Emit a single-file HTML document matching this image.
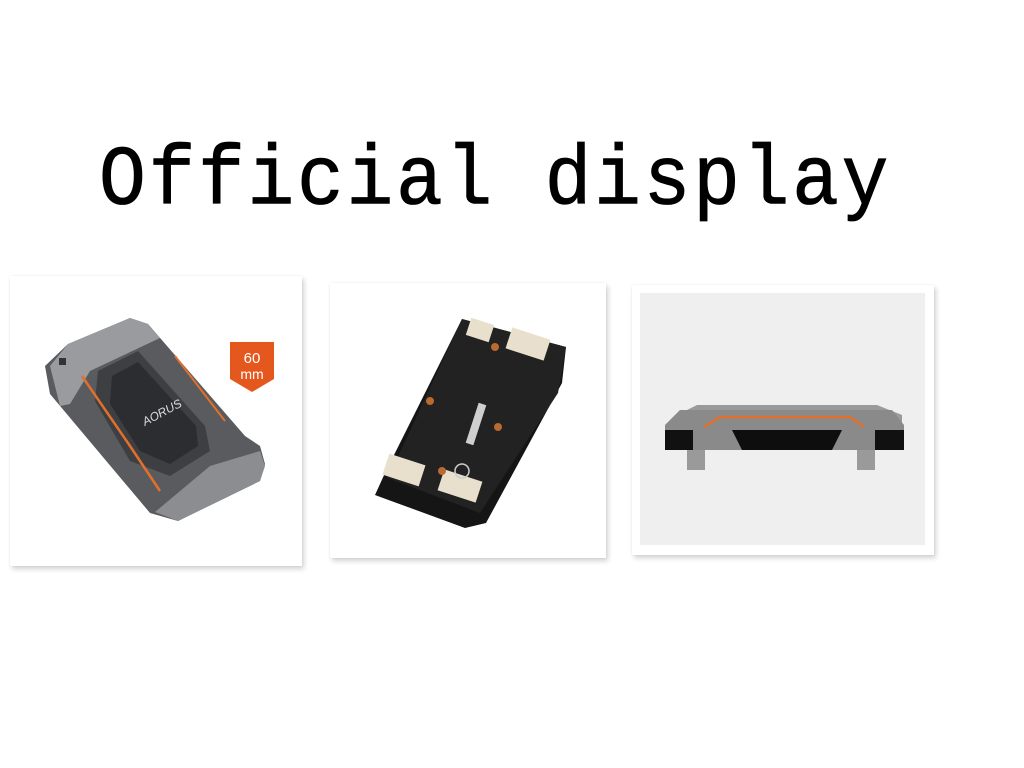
<!DOCTYPE html>
<html><head><meta charset="utf-8"><style>
html,body{margin:0;padding:0;background:#fff;width:1024px;height:768px;overflow:hidden;position:relative}
.t{position:absolute;left:99px;top:135px;font-family:"Liberation Mono",monospace;font-size:78px;line-height:100px;letter-spacing:2.7px;color:#000;white-space:pre;transform:scaleY(1.08);transform-origin:0 89px;font-weight:normal;-webkit-text-stroke:0.8px #000}
.card{position:absolute;background:#fff;box-shadow:2px 3px 5px rgba(0,0,0,0.18),0 0 2px rgba(0,0,0,0.06)}
svg{position:absolute;left:0;top:0}
</style></head><body>
<div class="t">Official display</div>

<div class="card" style="left:10px;top:276px;width:292px;height:290px">
<svg width="292" height="290" viewBox="0 0 292 290">
<polygon points="58,68 120,42 138,48 235,160 250,170 255,188 250,205 168,245 140,237 40,118 35,90" fill="#5a5b5e"/>
<polygon points="40,90 58,68 120,42 138,48 150,62 80,95 60,128 50,130" fill="#9a9b9e"/>
<polygon points="200,190 250,175 255,190 250,205 168,245 145,236" fill="#8c8d90"/>
<polygon points="88,95 128,75 195,150 200,175 160,200 120,185 85,125" fill="#3e3f42"/>
<polygon points="102,100 128,86 186,150 188,170 160,188 130,175 100,128" fill="#2c2d30"/>
<text x="135" y="150" font-family="Liberation Sans,sans-serif" font-size="12" fill="#ddd" transform="rotate(-28 135 150)" font-style="italic">AORUS</text>
<polyline points="72,100 120,170 150,215" stroke="#e2702a" stroke-width="2.5" fill="none"/>
<polyline points="165,80 215,145" stroke="#e2702a" stroke-width="2" fill="none"/>
<rect x="49" y="82" width="7" height="7" fill="#333"/>
<path d="M220 66 h44 v37 l-22 13 l-22 -13 z" fill="#e5581d"/>
<text x="242" y="87" font-family="Liberation Sans,sans-serif" font-size="15" fill="#fff" text-anchor="middle">60</text>
<text x="242" y="103" font-family="Liberation Sans,sans-serif" font-size="14" fill="#fff" text-anchor="middle">mm</text>
</svg></div>

<div class="card" style="left:330px;top:283px;width:276px;height:275px">
<svg width="276" height="275" viewBox="0 0 276 275">
<polygon points="132,36 236,64 232,100 156,240 135,245 45,212 55,190" fill="#151515"/>
<polygon points="132,36 236,64 228,110 150,230 58,195" fill="#222"/>
<rect x="138" y="38" width="24" height="18" fill="#e8e0cc" transform="rotate(18 150 47)"/>
<rect x="178" y="50" width="40" height="22" fill="#e8e0cc" transform="rotate(18 198 61)"/>
<rect x="55" y="176" width="38" height="22" fill="#e8e0cc" transform="rotate(18 74 187)"/>
<rect x="110" y="192" width="40" height="22" fill="#e8e0cc" transform="rotate(18 130 203)"/>
<rect x="142" y="120" width="8" height="42" fill="#cfcfcf" transform="rotate(18 146 141)"/>
<circle cx="100" cy="118" r="4" fill="#b86a30"/><circle cx="168" cy="144" r="4" fill="#b86a30"/><circle cx="165" cy="64" r="4" fill="#b86a30"/><circle cx="112" cy="188" r="4" fill="#b86a30"/>
<circle cx="132" cy="188" r="7" fill="none" stroke="#ccc" stroke-width="1.5"/>
</svg></div>

<div class="card" style="left:632px;top:285px;width:302px;height:270px">
<div style="position:absolute;left:8px;top:8px;width:285px;height:252px;background:#efefef"></div>
<svg width="302" height="270" viewBox="0 0 302 270">
<polygon points="45,130 65,120 245,120 270,130 270,150 45,150" fill="#9a9a9a"/>
<polygon points="33,140 48,125 260,125 272,140 272,165 33,165" fill="#8a8a8a"/>
<rect x="33" y="145" width="28" height="20" fill="#111"/>
<rect x="243" y="145" width="29" height="20" fill="#111"/>
<polygon points="100,145 210,145 200,165 110,165" fill="#0e0e0e"/>
<polyline points="72,142 88,132 218,132 232,142" stroke="#e2702a" stroke-width="2.5" fill="none"/>
<rect x="55" y="165" width="18" height="20" fill="#9a9a9a"/>
<rect x="225" y="165" width="18" height="20" fill="#9a9a9a"/>
</svg></div>
</body></html>
